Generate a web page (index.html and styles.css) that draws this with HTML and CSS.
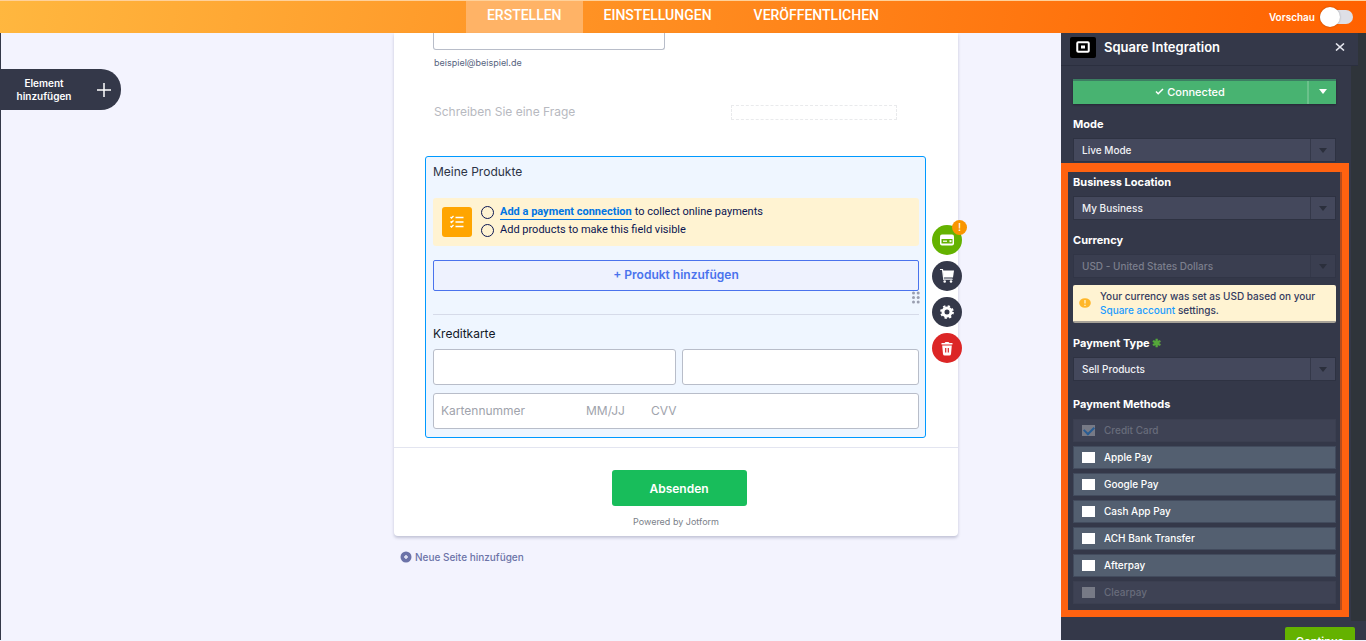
FILE: index.html
```
<!DOCTYPE html>
<html lang="de">
<head>
    <meta charset="utf-8">
    <title>Formular</title>
    <link rel="stylesheet" href="styles.css">
</head>
<body>

    <header class="topbar">
        <nav class="tabs">
            <a class="active" href="#build">ERSTELLEN</a>
            <a href="#settings">EINSTELLUNGEN</a>
            <a href="#publish">VERÖFFENTLICHEN</a>
        </nav>
        <label class="preview">Vorschau <input type="checkbox" class="toggle"></label>
    </header>

    <div class="workspace">
        <main class="canvas">
            <button class="add-element" type="button">
                <span>Element hinzufügen</span>
                <svg width="14" height="14" viewBox="0 0 14 14"><path d="M7 0v14M0 7h14" stroke="#fff" stroke-width="1.5"/></svg>
            </button>

            <div class="form-column">
                <form class="form-card">
                    <div class="questions">
                        <input class="email" id="email" type="email">
                        <label class="hint" for="email">beispiel@beispiel.de</label>
                        <div class="question">
                            <span>Schreiben Sie eine Frage</span>
                            <div class="dashed"></div>
                        </div>

                        <!-- Selected payment field -->
                        <section class="payment">
                            <h2>Meine Produkte</h2>
                            <div class="todo">
                                <span class="todo-icon">
                                    <svg width="16" height="16" viewBox="0 0 16 16" fill="none" stroke="#fff"><path d="M1.500 3l1 1 2-2M1.500 7.500l1 1 2-2M1.500 12l1 1 2-2" stroke-width="1.300"/><path d="M6.500 3.500H14.500M6.500 8H14.500M6.500 12.500H14.500" stroke-width="1.500"/></svg>
                                </span>
                                <ul>
                                    <li><a href="#connection">Add a payment connection</a> to collect online payments</li>
                                    <li>Add products to make this field visible</li>
                                </ul>
                            </div>
                            <button class="add-product" type="button">+ Produkt hinzufügen</button>
                            <svg class="grip" width="8" height="13" viewBox="0 0 8 13" fill="#9a9fb0"><circle cx="1.500" cy="2" r="1.500"/><circle cx="6.200" cy="2" r="1.500"/><circle cx="1.500" cy="6.500" r="1.500"/><circle cx="6.200" cy="6.500" r="1.500"/><circle cx="1.500" cy="11" r="1.500"/><circle cx="6.200" cy="11" r="1.500"/></svg>
                            <h2 class="card-title">Kreditkarte</h2>
                            <div class="names">
                                <input type="text" aria-label="Vorname">
                                <input type="text" aria-label="Nachname">
                            </div>
                            <div class="card-line">
                                <input class="number" type="text" placeholder="Kartennummer" aria-label="Kartennummer">
                                <input class="expiry" type="text" placeholder="MM/JJ" aria-label="MM/JJ">
                                <input class="cvv" type="text" placeholder="CVV" aria-label="CVV">
                            </div>

                            <div class="tools">
                                <button class="tool green" type="button" aria-label="Zahlung">
                                    <svg width="16" height="12" viewBox="0 0 16 12"><rect x="1" y=".5" width="14" height="11" rx="2" fill="#fff"/><path d="M2.500 5h11v4.500h-11z" fill="#64b200"/><path d="M4 7.200h4" stroke="#fff" stroke-width="1.200"/><path d="M10.500 6.200h2v2h-2z" fill="#fff"/></svg>
                                    <span class="badge">!</span>
                                </button>
                                <button class="tool" type="button" aria-label="Warenkorb">
                                    <svg width="16" height="16" viewBox="0 0 16 16"><path d="M1 1.500h2.500l1.300 10h8.700" fill="none" stroke="#fff" stroke-width="1.200"/><path d="M3.800 2.500H15L14 9.500H4.700z" fill="#fff"/><path d="M4.700 9.500h9l-.5 2H5z" fill="#8e919c"/><circle cx="5.700" cy="13.500" r="1.300" fill="#fff"/><circle cx="12" cy="13.500" r="1.300" fill="#fff"/></svg>
                                </button>
                                <button class="tool" type="button" aria-label="Einstellungen">
                                    <svg width="16" height="16" viewBox="0 0 16 16" fill="none" stroke="#fff"><circle cx="8" cy="8" r="4" stroke-width="3"/><circle cx="8" cy="8" r="5.900" stroke-width="2" stroke-dasharray="2.300 2.334"/></svg>
                                </button>
                                <button class="tool red" type="button" aria-label="Löschen">
                                    <svg width="14" height="15" viewBox="0 0 14 15"><path d="M1.500 2h3l1-1h3l1 1h3v1.500h-11zM2.200 4.500h9.600L11 13q-.2 1.500-1.700 1.500H4.700Q3.200 14.500 3 13z" fill="#fff"/><path d="M5.700 7v4.500M8.300 7v4.500" stroke="#dc2626" stroke-width="1.200"/></svg>
                                </button>
                            </div>
                        </section>
                    </div>
                    <div class="form-footer">
                        <button class="submit" type="button">Absenden</button>
                        <p>Powered by Jotform</p>
                    </div>
                </form>
                <button class="new-page" type="button">
                    <svg width="12" height="12" viewBox="0 0 12 12"><circle cx="6" cy="6" r="5.500" fill="#6c73a8"/><path d="M6 4v4M4 6h4" stroke="#e6e7f5" stroke-width="1.500"/></svg>
                    Neue Seite hinzufügen
                </button>
            </div>
        </main>

        <aside class="panel">
            <div class="panel-head">
                <span class="logo">
                    <svg width="14" height="12" viewBox="0 0 14 12"><rect x="1.250" y="1.250" width="11.500" height="9.500" rx="1" fill="none" stroke="#fff" stroke-width="2"/><rect x="5" y="4.500" width="4" height="3" fill="#fff"/></svg>
                </span>
                <h1>Square Integration</h1>
                <button class="close" type="button" aria-label="Schließen">
                    <svg width="10" height="8" viewBox="0 0 10 8"><path d="M1 .5l8 7M9 .5l-8 7" stroke="#e4e6ee" stroke-width="1.600"/></svg>
                </button>
            </div>

            <div class="panel-body">
                <div class="top-fields">
                    <div class="connected">
                        <button type="button">
                            <svg width="9" height="7" viewBox="0 0 9 7"><path d="M1 3.500l2.200 2.200L8 1" fill="none" stroke="#fff" stroke-width="1.500"/></svg>
                            Connected
                        </button>
                        <button class="more" type="button" aria-label="Mehr"><span class="arrow"></span></button>
                    </div>
                    <div class="field">
                        <label for="mode">Mode</label>
                        <div class="select"><select id="mode"><option>Live Mode</option></select><span class="arrow"></span></div>
                    </div>
                </div>

                <!-- Highlighted settings -->
                <div class="marked">
                    <div class="field">
                        <label for="location">Business Location</label>
                        <div class="select"><select id="location"><option>My Business</option></select><span class="arrow"></span></div>
                    </div>
                    <div class="field">
                        <label for="currency">Currency</label>
                        <div class="select off"><select id="currency" disabled><option>USD - United States Dollars</option></select><span class="arrow"></span></div>
                    </div>
                    <div class="note">
                        <svg width="12" height="10" viewBox="0 0 12 10"><ellipse cx="6" cy="5" rx="5.800" ry="4.800" fill="#ffb629"/><path d="M6 2v3.500M6 6.800v1.300" stroke="#fff3d0" stroke-width="1.300"/></svg>
                        <p>Your currency was set as USD based on your <a href="#account">Square account</a> settings.</p>
                    </div>
                    <div class="field">
                        <label for="type">Payment Type <span class="star">✱</span></label>
                        <div class="select"><select id="type"><option>Sell Products</option></select><span class="arrow"></span></div>
                    </div>
                    <fieldset class="methods">
                        <legend>Payment Methods</legend>
                        <label class="off"><input type="checkbox" checked disabled>Credit Card</label>
                        <label><input type="checkbox">Apple Pay</label>
                        <label><input type="checkbox">Google Pay</label>
                        <label><input type="checkbox">Cash App Pay</label>
                        <label><input type="checkbox">ACH Bank Transfer</label>
                        <label><input type="checkbox">Afterpay</label>
                        <label class="off"><input type="checkbox" disabled>Clearpay</label>
                    </fieldset>
                </div>
            </div>

            <div class="panel-foot">
                <button type="button">Continue</button>
            </div>
        </aside>
    </div>

</body>
</html>
```
FILE: styles.css
```
* {
    box-sizing: border-box;
}

body {
    display: flex;
    flex-direction: column;
    height: 100vh;
    margin: 0;
    padding-bottom: 1px;
    overflow: hidden;
    background: #f3f3fe;
    color: #2c3345;
    font-family: Inter, "Liberation Sans", sans-serif;
    font-size: 12px;
    line-height: 18px;
}

button, input, select {
    font: inherit;
    margin: 0;
}

button {
    border: 0;
    padding: 0;
}

h1, h2, p, ul {
    margin: 0;
    padding: 0;
}

svg {
    display: block;
    flex: none;
}

/* Top bar */

.topbar {
    display: grid;
    grid-template-columns: 1fr auto 1fr;
    flex: none;
    height: 33px;
    border-top: 1px solid #ffd19a;
    background: linear-gradient(100deg, #ffb73f, #ff6100);
    background-origin: border-box;
    color: #fff;
}

.tabs {
    display: flex;
    grid-column: 2;
}

.tabs a {
    padding: 5px 21px;
    color: #fff;
    font-family: Roboto, sans-serif;
    font-size: 14px;
    font-weight: 500;
    text-decoration: none;
}

.tabs .active {
    background: #ffb366;
}

.preview {
    display: flex;
    align-items: center;
    justify-self: end;
    gap: 5px;
    padding-right: 13px;
    font-size: 10px;
    font-weight: 600;
}

.toggle {
    appearance: none;
    display: flex;
    align-items: center;
    width: 33px;
    height: 14px;
    border-radius: 7px;
    background: #dedfe6;
}

.toggle::before {
    content: "";
    width: 20px;
    height: 20px;
    border-radius: 50%;
    background: #fff;
    box-shadow: 0 0 2px rgba(0, 0, 0, 0.3);
}

/* Canvas */

.workspace {
    display: flex;
    flex: 1;
    min-height: 0;
}

.canvas {
    display: flex;
    flex: 1;
    align-items: flex-start;
    justify-content: space-between;
    min-width: 0;
    padding-right: 103px;
    border-left: 1px solid #343849;
}

.add-element {
    display: flex;
    align-items: center;
    justify-content: space-between;
    width: 120px;
    height: 41px;
    margin-top: 36px;
    padding: 0 10px 0 8px;
    border-radius: 0 20px 20px 0;
    background: #343849;
    color: #fff;
    font-size: 10px;
    font-weight: 600;
    line-height: 13px;
}

.add-element span {
    width: 70px;
}

.form-column {
    width: 564px;
}

.form-card {
    border-radius: 0 0 4px 4px;
    background: #fff;
    box-shadow: 0 2px 3px rgba(50, 55, 100, 0.25);
}

.questions {
    padding: 0 32px 9px 31px;
    border-bottom: 1px solid #e3e5f0;
}

.questions input {
    min-width: 0;
    border: 1px solid #b8bdc9;
    border-radius: 3px;
    background: #fff;
}

.questions .email {
    display: block;
    width: 232px;
    height: 17px;
    margin-left: 8px;
    border-top: 0;
    border-radius: 0 0 3px 3px;
}

.hint {
    display: block;
    margin: 4px 9px 0;
    color: #57647e;
    font-size: 9px;
}

.question {
    display: flex;
    align-items: center;
    justify-content: space-between;
    margin: 31px 29px 35px 9px;
    color: #b7b9c0;
}

.dashed {
    width: 166px;
    height: 15px;
    border: 1px dashed #e9eaec;
}

/* Payment field */

.payment {
    position: relative;
    padding: 6px 6px 8px 7px;
    border: 1px solid #0099ff;
    border-radius: 3px;
    background: #eff6ff;
}

.payment h2 {
    font-size: 12px;
    font-weight: 400;
}

.todo {
    display: flex;
    align-items: center;
    gap: 9px;
    height: 48px;
    margin-top: 17px;
    padding: 0 9px;
    border-radius: 3px;
    background: #fff3d2;
}

.todo-icon {
    display: grid;
    place-items: center;
    width: 30px;
    height: 30px;
    border-radius: 3px;
    background: #ffa500;
}

.todo ul {
    padding-bottom: 2px;
    color: #0a1551;
    font-family: Roboto, sans-serif;
    font-size: 11px;
    list-style: none;
}

.todo li {
    display: flex;
    align-items: center;
    gap: 3px;
}

.todo li::before {
    content: "";
    width: 11px;
    height: 11px;
    margin-right: 3px;
    border: 1px solid #0a1551;
    border-radius: 50%;
}

.todo a {
    border-bottom: 1px solid #0075e3;
    color: #0075e3;
    font-weight: 700;
    line-height: 14px;
    text-decoration: none;
}

.add-product {
    width: 100%;
    height: 31px;
    margin-top: 14px;
    padding-bottom: 2px;
    border: 1px solid #4a73ed;
    border-radius: 2px;
    background: #eef2fe;
    color: #4a73ed;
    font-size: 12px;
    font-weight: 600;
}

.grip {
    position: absolute;
    top: 134px;
    right: 5px;
}

.payment .card-title {
    margin-top: 23px;
    padding: 10px 0 6px;
    border-top: 1px solid #d6dbe9;
    color: #111827;
}

.names {
    display: grid;
    grid-template-columns: 243fr 237fr;
    gap: 6px;
}

.names input {
    width: 100%;
    height: 36px;
}

.card-line {
    display: flex;
    height: 36px;
    margin-top: 8px;
    padding: 0 7px;
    border: 1px solid #b8bdc9;
    border-radius: 3px;
    background: #fff;
}

.card-line input {
    padding: 0;
    border: 0;
    font-size: 12px;
}

.card-line input::placeholder {
    color: #a0a3ac;
}

.number {
    width: 145px;
}

.expiry {
    width: 65px;
}

.cvv {
    flex: 1;
}

.tools {
    position: absolute;
    top: 68px;
    right: -37px;
    display: grid;
    gap: 6px;
}

.tool {
    position: relative;
    display: grid;
    place-items: center;
    width: 30px;
    height: 30px;
    border-radius: 50%;
    background: #343849;
}

.green {
    background: #64b200;
}

.red {
    background: #dc2626;
}

.badge {
    position: absolute;
    top: -5px;
    right: -5px;
    width: 15px;
    height: 15px;
    border-radius: 50%;
    background: #f99500;
    color: #fff;
    font-size: 11px;
    line-height: 15px;
}

.form-footer {
    padding: 22px 0 5px;
    text-align: center;
}

.submit {
    width: 135px;
    height: 36px;
    margin-left: 6px;
    padding-top: 2px;
    border-radius: 3px;
    background: #18bd5b;
    color: #fff;
    font-size: 12px;
    font-weight: 600;
}

.form-footer p {
    margin-top: 7px;
    color: #7b7f89;
    font-size: 9px;
}

.new-page {
    display: flex;
    align-items: center;
    gap: 3px;
    margin: 12px 6px;
    background: none;
    color: #6c73a8;
    font-size: 10px;
    font-weight: 500;
}

/* Integration panel */

.panel {
    display: flex;
    flex: none;
    flex-direction: column;
    width: 305px;
    background: #2f343a;
    color: #fff;
    font-size: 10px;
    font-weight: 500;
}

.panel-head {
    display: flex;
    flex: none;
    align-items: center;
    height: 33px;
    margin-right: 8px;
    padding: 0 13px 4px 9px;
    border-bottom: 1px solid #2b2f3f;
    background: #343849;
}

.panel-head h1 {
    flex: 1;
    margin-left: 8px;
    font-size: 13px;
    font-weight: 600;
}

.logo {
    display: grid;
    place-items: center;
    width: 26px;
    height: 21px;
    border-radius: 2px;
    background: #000;
}

.close {
    background: none;
}

.panel-body {
    flex: 1;
    min-height: 0;
    margin-right: 15px;
    overflow: hidden;
    background: #343849;
}

.top-fields {
    padding: 13px 15px 1px 12px;
}

.connected {
    display: flex;
    height: 25px;
    border-top: 2px solid #3c7e62;
    background: #48b371;
    box-shadow: 0 1px 2px rgba(0, 0, 0, 0.3);
}

.connected button {
    display: flex;
    flex: 1;
    align-items: center;
    justify-content: center;
    gap: 3px;
    padding-bottom: 2px;
    background: none;
    color: #fff;
    font-size: 11px;
}

.connected .more {
    flex: none;
    width: 29px;
    border-left: 2px solid #6bc18b;
}

.arrow {
    border: 4px solid transparent;
    border-top: 5px solid;
    border-bottom: 0;
}

.field > label,
.methods legend {
    display: block;
    padding: 0;
    font-size: 11px;
    font-weight: 700;
}

.top-fields .field {
    margin-top: 11px;
}

.select {
    position: relative;
    height: 24px;
    margin-top: 5px;
    border: 1px solid #2e3242;
    background: #44485c;
}

.select select {
    appearance: none;
    width: 100%;
    height: 22px;
    padding: 0 34px 0 8px;
    border: 0;
    background: linear-gradient(#343849, #343849) right 24px top 0 / 1px 100% no-repeat;
    color: #f0f1f5;
    font-weight: 500;
    opacity: 1;
}

.select .arrow {
    position: absolute;
    top: 9px;
    right: 8px;
    color: #2b2f3c;
    pointer-events: none;
}

.select.off {
    border-color: #313546;
    background: #3a3e50;
}

.select.off select {
    color: #7c7f8d;
}

.marked {
    margin-right: 2px;
    padding: 1px 6px 6px 5px;
    border: 7px solid #ff6210;
    border-top-width: 9px;
    box-shadow: inset -2px 0 #b84d1c;
}

.marked .field + .field {
    margin-top: 11px;
}

.note {
    display: flex;
    align-items: center;
    gap: 9px;
    height: 38px;
    margin: 7px 0 11px;
    padding-left: 6px;
    border-bottom: 2px solid #a7a298;
    border-radius: 2px;
    background: #fff3d2;
    color: #343b60;
    font-size: 10px;
    line-height: 14px;
}

.note a {
    color: #1b9cff;
    text-decoration: none;
}

.star {
    color: #55a83a;
}

.methods {
    display: grid;
    gap: 4px;
    margin: 14px 0 0;
    padding: 0;
    border: 0;
}

.methods legend {
    margin-bottom: 6px;
}

.methods label {
    display: flex;
    align-items: center;
    gap: 9px;
    height: 23px;
    padding: 0 0 2px 8px;
    border: 1px solid #424b5d;
    background: #535f70;
}

.methods input {
    appearance: none;
    display: grid;
    place-items: center;
    width: 13px;
    height: 11px;
    margin-top: 2px;
    background: #fff;
}

.methods .off {
    border-color: #3b3f50;
    background: #3e4254;
    color: #686c7b;
}

.methods .off input {
    background: #777a86;
}

.methods input:checked::after {
    content: "";
    width: 8px;
    height: 5px;
    margin-bottom: 3px;
    border: solid #285c93;
    border-width: 0 0 2px 2px;
    transform: rotate(-45deg);
}

.panel-foot {
    display: flex;
    flex: none;
    justify-content: flex-end;
    height: 19px;
    padding: 6px 11px 0 0;
    overflow: hidden;
    background: #343849;
}

.panel-foot button {
    flex: none;
    width: 70px;
    height: 28px;
    border-radius: 2px;
    background: #64b200;
    color: #fff;
    font-size: 11px;
    font-weight: 600;
}
```
